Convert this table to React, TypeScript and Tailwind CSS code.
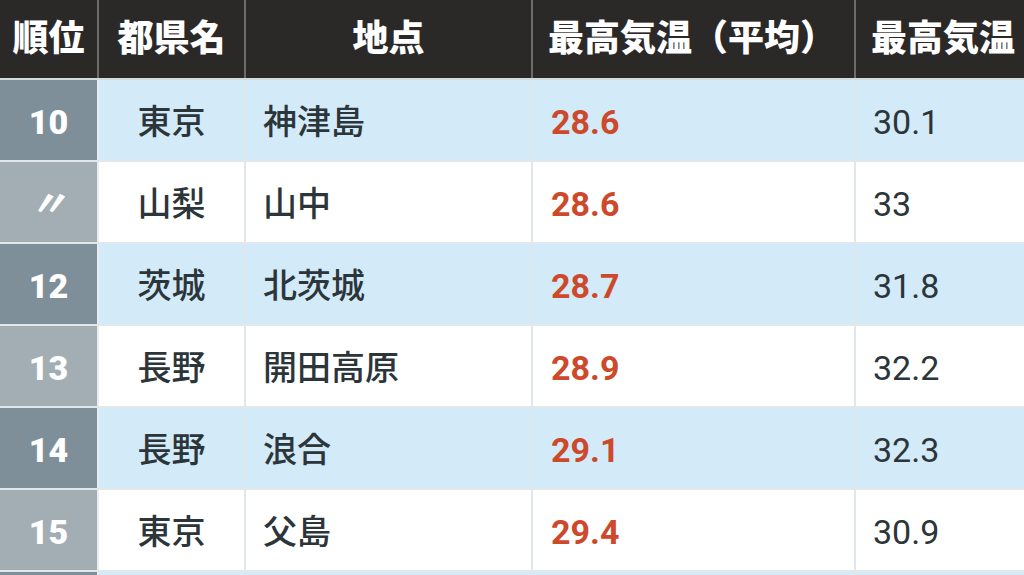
type Row = {
  rank: string;
  pref: string;
  place: string;
  avg: string;
  max: string;
};

const rows: Row[] = [
  { rank: '10', pref: '東京', place: '神津島', avg: '28.6', max: '30.1' },
  { rank: '〃', pref: '山梨', place: '山中', avg: '28.6', max: '33' },
  { rank: '12', pref: '茨城', place: '北茨城', avg: '28.7', max: '31.8' },
  { rank: '13', pref: '長野', place: '開田高原', avg: '28.9', max: '32.2' },
  { rank: '14', pref: '長野', place: '浪合', avg: '29.1', max: '32.3' },
  { rank: '15', pref: '東京', place: '父島', avg: '29.4', max: '30.9' },
  { rank: '', pref: '', place: '', avg: '', max: '' },
];

export default function App() {
  return (
    <div
      className="h-[575px] w-[1024px] overflow-hidden bg-white"
      style={{ fontFamily: 'Roboto, "Noto Sans CJK JP", sans-serif' }}
    >
      <div className="w-[1200px]">
        {/* header */}
        <div className="flex h-[80px] border-b-2 border-[#d5dadd] bg-[#2b2928] text-[36px] font-black leading-none text-white">
          <div className="flex w-[99px] shrink-0 items-center justify-center border-r-2 border-[#6e6c6b]">
            順位
          </div>
          <div className="flex w-[147px] shrink-0 items-center justify-center border-r-2 border-[#6e6c6b]">
            都県名
          </div>
          <div className="flex w-[287px] shrink-0 items-center justify-center border-r-2 border-[#6e6c6b]">
            地点
          </div>
          <div className="flex w-[323px] shrink-0 items-center border-r-2 border-[#6e6c6b] pl-[15px]">
            最高気温（平均）
          </div>
          <div className="flex w-[300px] shrink-0 items-center pl-[15px]">
            最高気温
          </div>
        </div>

        {rows.map((r, i) => {
          const blue = i % 2 === 0;
          return (
            <div
              key={i}
              className={
                'flex h-[82px] border-b-2 border-[#e1e7ea] text-[34px] font-medium leading-none text-[#2b353a] ' +
                (blue ? 'bg-[#d3eaf8]' : 'bg-white')
              }
            >
              <div
                className={
                  'flex w-[99px] shrink-0 items-center justify-center border-r-2 border-[#e6ecef] pt-[3px] font-black text-white ' +
                  (blue ? 'bg-[#7e8f9a]' : 'bg-[#a2adb4]')
                }
              >
                {r.rank === '〃' ? (
                  <span className="text-[36px] italic">〃</span>
                ) : (
                  <span className="text-[34px]">{r.rank}</span>
                )}
              </div>
              <div className="flex w-[147px] shrink-0 items-center justify-center border-r-2 border-[#e0e6e9] pt-[3px]">
                {r.pref}
              </div>
              <div className="flex w-[287px] shrink-0 items-center border-r-2 border-[#e0e6e9] pl-[17px] pt-[3px]">
                {r.place}
              </div>
              <div className="flex w-[323px] shrink-0 items-center border-r-2 border-[#e0e6e9] pl-[18px] pt-[3px] text-[34px] font-bold text-[#cc4a2b]">
                {r.avg}
              </div>
              <div className="flex w-[300px] shrink-0 items-center pl-[17px] pt-[3px] text-[34px] font-normal">
                {r.max}
              </div>
            </div>
          );
        })}
      </div>
    </div>
  );
}
